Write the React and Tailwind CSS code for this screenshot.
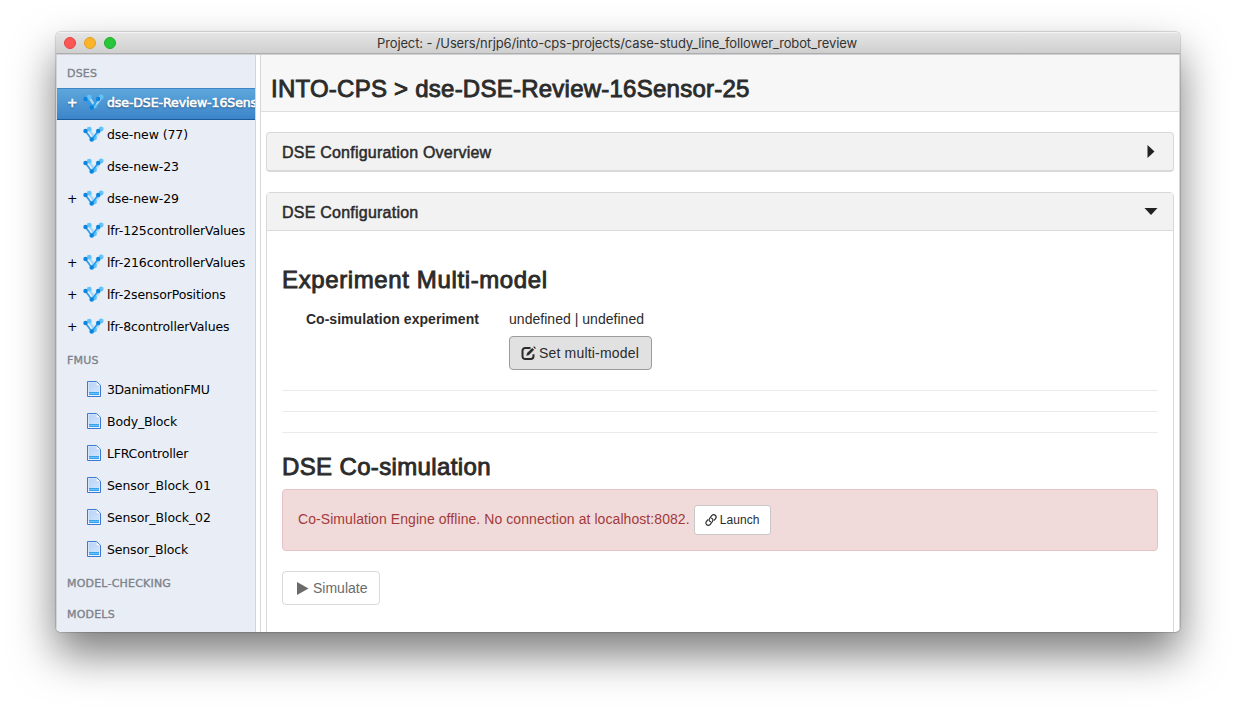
const dses = [
  { label: "dse-DSE-Review-16Sensor-25", plus: true, selected: true, cls: "tracking-[-0.08px]" },
  { label: "dse-new (77)", cls: "tracking-[-0.1px]" },
  { label: "dse-new-23", cls: "tracking-[-0.1px]" },
  { label: "dse-new-29", plus: true, cls: "tracking-[-0.1px]" },
  { label: "lfr-125controllerValues", cls: "tracking-[-0.13px]" },
  { label: "lfr-216controllerValues", plus: true, cls: "tracking-[-0.13px]" },
  { label: "lfr-2sensorPositions", plus: true, cls: "tracking-[-0.13px]" },
  { label: "lfr-8controllerValues", plus: true, cls: "tracking-[-0.13px]" },
];

const fmus = [
  { label: "3DanimationFMU", cls: "tracking-[-0.36px]" },
  { label: "Body_Block", cls: "tracking-[-0.15px]" },
  { label: "LFRController", cls: "tracking-[-0.2px]" },
  { label: "Sensor_Block_01", cls: "tracking-[-0.08px]" },
  { label: "Sensor_Block_02", cls: "tracking-[-0.08px]" },
  { label: "Sensor_Block", cls: "tracking-[-0.15px]" },
];

function NodesIcon() {
  return (
    <svg className="h-4 w-[21px] shrink-0" viewBox="0 0 21 16">
      <path d="M6 3.400l6 8.600L18.500 3.400" fill="none" stroke="#a3dafc" strokeWidth="2.400" />
      <circle cx="6.200" cy="3.200" r="2.400" fill="#62c3fb" />
      <circle cx="18.200" cy="3" r="2.400" fill="#62c3fb" />
      <circle cx="11.500" cy="12" r="2.400" fill="#62c3fb" />
      <path d="M2.500 5l6.200 8.500 6.500-8.500" fill="none" stroke="#2a9cec" strokeWidth="1.700" />
      <circle cx="2.500" cy="5" r="2.200" fill="#0a84dc" />
      <circle cx="15.200" cy="5" r="2.200" fill="#0a84dc" />
      <circle cx="8.700" cy="13.500" r="2.200" fill="#0a84dc" />
    </svg>
  );
}

function FileIcon() {
  return (
    <svg className="h-4 w-[14px] shrink-0" viewBox="0 0 14 16">
      <defs>
        <linearGradient id="page" x1="0" y1="0" x2="1" y2="1">
          <stop offset="0" stopColor="#b5d3f8" />
          <stop offset="1" stopColor="#d3e4fb" />
        </linearGradient>
      </defs>
      <path d="M.5.5h9.200L13.500 4.300v11.200H.5z" fill="#e8f2fe" stroke="#3d79cf" strokeLinejoin="round" />
      <path d="M1.500 1.500h7.500v3.500h3.500v7H1.500z" fill="url(#page)" />
      <path d="M9.300 1v3.700h3.800" fill="#fff" stroke="#b4cdf2" strokeWidth=".7" />
      <path d="M2 11h10v3H2z" fill="#3aa0f6" />
      <path d="M2 12.500h10" stroke="#6cc0fd" strokeWidth="1" />
    </svg>
  );
}

function Section({ children }) {
  return (
    <div className="flex h-[31px] items-center pl-[10px] pt-px text-[11px] tracking-[0.2px] text-[#7d828b] [-webkit-text-stroke:0.35px_#7d828b]">
      <span className="translate-y-px">{children}</span>
    </div>
  );
}

function Item({ item, icon, indent }) {
  return (
    <div
      className={
        "flex h-8 items-center overflow-hidden whitespace-nowrap pb-[3px] text-[12.5px] " +
        (item.selected
          ? "border-y border-t-[#3f86c6] border-b-[#1c5a9c] bg-linear-to-b from-[#5da7dc] to-[#3c84ca] text-white [text-shadow:0_1px_2px_rgba(0,0,0,0.6)] [-webkit-text-stroke:0.6px_white]"
          : "text-black")
      }
    >
      <span className="w-[26px] shrink-0 translate-y-px pl-[10px]">{item.plus ? "+" : ""}</span>
      <span className={"-translate-y-px " + indent}>{icon}</span>
      <span className={"translate-y-px " + item.cls}>{item.label}</span>
    </div>
  );
}

function Medium({ className, children }) {
  return <span className={"whitespace-nowrap " + className}>{children}</span>;
}

export default function App() {
  return (
    <div className="h-[712px] w-[1236px] overflow-hidden bg-white px-14 pt-8 font-['Liberation_Sans',Arial,sans-serif] text-[#2b2b2b]">
      <div className="flex h-[600px] w-[1124px] flex-col overflow-hidden rounded-[5px] bg-white shadow-[0_22px_44px_rgba(0,0,0,0.52),0_0_1px_1px_rgba(0,0,0,0.15)]">
        <div className="flex h-[22px] shrink-0 items-center border-b border-[#adadad] bg-linear-to-b from-[#e6e6e6] to-[#cfcfcf] shadow-[inset_0_1px_0_#f3f3f3]">
          <div className="flex w-[321px] gap-2 pl-2">
            <i className="size-3 rounded-full border border-[#e2443f] bg-[#fc5753]" />
            <i className="size-3 rounded-full border border-[#dfa023] bg-[#fdb429]" />
            <i className="size-3 rounded-full border border-[#1dad2b] bg-[#28c73b]" />
          </div>
          <div className="translate-y-px whitespace-nowrap font-['Inter',sans-serif] text-[13px] leading-none tracking-[-0.13px] text-[#333]">
            Project: - /Users/nrjp6/into-cps-projects/case-study_line_follower_robot_review
          </div>
        </div>

        <div className="flex min-h-0 flex-1 border-t border-[#cfd1d5]">
          <aside className="flex w-[200px] shrink-0 flex-col overflow-hidden border-x border-[#d3d5d9] bg-[#e9eef6] pt-[2px] font-['DejaVu_Sans',Verdana,sans-serif]">
            <Section>DSES</Section>
            {dses.map((d) => (
              <Item key={d.label} item={d} icon={<NodesIcon />} indent="mr-[3px]" />
            ))}
            <Section>FMUS</Section>
            {fmus.map((f) => (
              <Item key={f.label} item={f} icon={<FileIcon />} indent="ml-1 mr-[6px]" />
            ))}
            <Section>MODEL-CHECKING</Section>
            <Section>MODELS</Section>
          </aside>

          <main className="ml-1 min-w-0 flex-1 overflow-hidden border-x border-[#d6d6d6]">
            <header className="flex h-[57px] items-center border-b border-[#dedede] bg-[#f7f7f7] pl-[10px] pt-[11px] text-[24px] leading-none">
              <Medium className="tracking-[0.24px] [-webkit-text-stroke:0.9px_#2b2b2b]">INTO-CPS &gt; dse-DSE-Review-16Sensor-25</Medium>
            </header>

            <div className="px-[5px] pt-5">
              <div className="flex h-10 items-center justify-between rounded-[4px] border border-b-2 border-[#d9d9d9] bg-[#f2f2f2] pl-[15px] pr-[18px] text-[16px] leading-none">
                <Medium className="translate-y-px tracking-[0.22px] [-webkit-text-stroke:0.5px_#2b2b2b]">DSE Configuration Overview</Medium>
                <svg className="h-[13px] w-[8px]" viewBox="0 0 8 13"><path d="M.5 0L7.500 6.500.5 13z" fill="#222" /></svg>
              </div>

              <div className="mt-5 h-[500px] rounded-t-[4px] border border-[#d9d9d9]">
                <div className="flex h-[38px] items-center justify-between border-b border-[#d9d9d9] bg-[#f2f2f2] pl-[15px] pr-[15px] text-[16px] leading-none">
                  <Medium className="translate-y-px tracking-[0.23px] [-webkit-text-stroke:0.5px_#2b2b2b]">DSE Configuration</Medium>
                  <svg className="h-[7px] w-[14px]" viewBox="0 0 14 7"><path d="M.5 0h13L7 7z" fill="#222" /></svg>
                </div>

                <div className="px-[15px] pt-9">
                  <h2 className="h-[26px] text-[24px] leading-[26px] tracking-[0.62px] [-webkit-text-stroke:0.9px_#2b2b2b]">Experiment Multi-model</h2>
                  <div className="mt-4 flex h-[61px] text-[14px] leading-5">
                    <div className="w-[197px] text-right font-bold tracking-[0.05px]">Co-simulation experiment</div>
                    <div className="pl-[30px]">
                      <div className="tracking-[0.03px]">undefined | undefined</div>
                      <button className="mt-[7px] flex h-[34px] w-[143px] items-center rounded-[4px] border border-[#9c9c9c] bg-[#e1e1e1] pl-[11px] tracking-[0.18px]">
                        <svg className="mr-[3px] size-[15px]" viewBox="0 0 15 15" fill="none">
                          <path d="M9.500 2H4.200A2.700 2.700 0 0 0 1.500 4.700v5.600A2.700 2.700 0 0 0 4.200 13h5.600a2.700 2.700 0 0 0 2.700-2.700V8.200" stroke="#2b2b2b" strokeWidth="2" />
                          <path d="M5.300 9.800l.8-2.700L11.200 2l1.900 1.800L8 9z" fill="#2b2b2b" />
                          <path d="M12.200 1l.9-.8 1.800 1.800-.8.9z" fill="#2b2b2b" />
                        </svg>
                        Set multi-model
                      </button>
                    </div>
                  </div>

                  <hr className="mt-5 border-[#ebebeb]" />
                  <hr className="mt-5 border-[#ebebeb]" />
                  <hr className="mt-5 border-[#ebebeb]" />

                  <h2 className="mt-[21px] h-[26px] text-[24px] leading-[26px] tracking-[0.36px] [-webkit-text-stroke:0.9px_#2b2b2b]">DSE Co-simulation</h2>
                  <div className="mt-[9px] flex h-[62px] items-center rounded-[4px] border border-[#e6c1c7] bg-[#f0dada] pl-[15px] text-[14px] text-[#a33a3a]">
                    <span className="-translate-y-px whitespace-nowrap tracking-[0.07px]">Co-Simulation Engine offline. No connection at localhost:8082.</span>
                    <button className="ml-[4px] flex h-[30px] w-[77px] items-center rounded-[3px] border border-[#c8c8c8] bg-white pl-[10px] text-[12px] tracking-[0.1px] text-[#2b2b2b]">
                      <svg className="mr-[3px] size-3" viewBox="0 0 12 12" fill="none" stroke="#2b2b2b" strokeWidth="1.200" strokeLinecap="round">
                        <path d="M5.500 7.800C4 7.300 3.700 5.700 4.600 4.500l2.100-2.800C7.600.5 9.100.3 10.200 1.200c1.100.9 1.200 2.300.3 3.400L9.300 6.200" />
                        <path d="M6.500 4.200c1.500.5 1.800 2.100.9 3.300l-2.100 2.800c-.9 1.200-2.400 1.400-3.500.5-1.100-.9-1.200-2.300-.3-3.400l1.200-1.600" />
                      </svg>
                      Launch
                    </button>
                  </div>

                  <button className="mt-5 flex h-[34px] w-[98px] items-center rounded-[4px] border border-[#d9d9d9] bg-white pl-[14px] text-[14px] text-[#6b6b6b]">
                    <svg className="mr-[4px] h-[13px] w-3" viewBox="0 0 12 13"><path d="M0 0l11.500 6.500L0 13z" fill="#6b6b6b" /></svg>
                    Simulate
                  </button>
                </div>
              </div>
            </div>
          </main>
        </div>
      </div>
    </div>
  );
}
